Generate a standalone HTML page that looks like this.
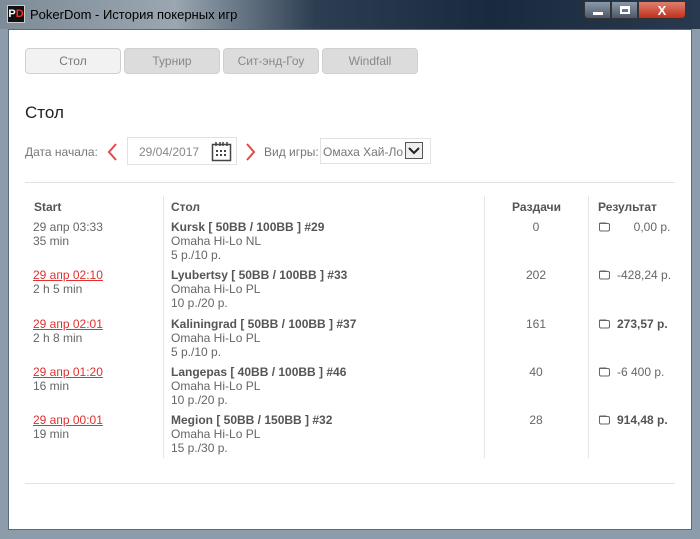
<!DOCTYPE html>
<html><head><meta charset="utf-8"><style>
*{margin:0;padding:0;box-sizing:border-box}
body{width:700px;height:539px;overflow:hidden;background:#6f8090;font-family:"Liberation Sans",Arial,"Noto Sans CJK SC",sans-serif;position:relative}
.tb{position:absolute;left:0;top:0;width:700px;height:30px;background:linear-gradient(90deg,#7d8b98 0%,#9aa6b0 25%,#2d3e52 45%,#1a2a3e 70%,#2a3a4e 100%)}
.frame{position:absolute;left:0;top:29px;width:700px;height:510px;background:#8c9cab}
.win{position:absolute;left:8px;top:29px;width:684px;height:501px;background:#fff;border:1px solid #5a6a7a}
.abs{position:absolute}
.t{font-size:12px;color:#666;line-height:14px}
.tab{position:absolute;top:48px;height:26px;border-radius:4px;background:#dcdcdc;border:1px solid #d0d0d0;color:#888;font-size:12px;text-align:center;line-height:24px;width:96px}
.b{font-weight:bold;color:#555}
.red{color:#e03030;text-decoration:underline}
.vl{position:absolute;top:196px;height:262px;width:1px;background:#e6e6e6}
.wal{display:inline-block;width:13px;height:11px;vertical-align:-1px;margin-right:6px}
</style></head><body>
<svg width="0" height="0" style="position:absolute"><defs><symbol id="w" viewBox="0 0 13 11"><path d="M2.5 2.5h7.5a1.5 1.5 0 0 1 1.5 1.5v4.5a1.5 1.5 0 0 1-1.5 1.5h-7a1.5 1.5 0 0 1-1.5-1.5v-5.5a1 1 0 0 1 1-1z M1.5 3.5a1 1 0 0 1 1-1.5h6" fill="none" stroke="#666" stroke-width="1"/></symbol></defs></svg>
<div class="tb"></div>
<div class="frame"></div>
<div class="abs" style="left:7px;top:5px;width:18px;height:18px;background:#111;border:1px solid #ccc;color:#fff;font-size:11px;font-weight:bold;line-height:16px;text-align:center">P<span style="color:#e33">D</span></div>
<div class="abs" style="left:30px;top:7px;font-size:13px;color:#000">PokerDom - История покерных игр</div>
<div class="abs" style="left:584px;top:1px;width:27px;height:18px;background:linear-gradient(#8a98a8,#4a5868);border:1px solid #333;border-radius:0 0 0 4px"><div style="position:absolute;left:8px;top:10px;width:10px;height:3px;background:#fff"></div></div>
<div class="abs" style="left:611px;top:1px;width:27px;height:18px;background:linear-gradient(#8a98a8,#4a5868);border:1px solid #333"><div style="position:absolute;left:8px;top:4px;width:10px;height:8px;border:2px solid #fff;border-top-width:3px"></div></div>
<div class="abs" style="left:638px;top:1px;width:48px;height:18px;background:linear-gradient(#e08070,#c0301c);border:1px solid #333;border-radius:0 0 4px 0;color:#fff;font-weight:bold;font-size:13px;text-align:center;line-height:17px">X</div>
<div class="win"></div>
<div class="tab" style="left:25px;background:#f2f2f2;color:#777">Стол</div>
<div class="tab" style="left:124px">Турнир</div>
<div class="tab" style="left:223px">Сит-энд-Гоу</div>
<div class="tab" style="left:322px">Windfall</div>
<div class="abs" style="left:25px;top:103px;font-size:17px;color:#222">Стол</div>
<div class="abs t" style="left:25px;top:145px;color:#777">Дата начала:</div>
<svg class="abs" style="left:106px;top:142px" width="12" height="20"><path d="M10 2L3 10l7 8" fill="none" stroke="#e04a4a" stroke-width="2"/></svg>
<div class="abs" style="left:127px;top:137px;width:110px;height:28px;border:1px solid #e2e2e2"></div>
<div class="abs t" style="left:139px;top:145px;color:#888">29/04/2017</div>
<svg class="abs" style="left:211px;top:141px" width="21" height="21" viewBox="0 0 21 21"><rect x="1.5" y="3.5" width="18" height="16" fill="none" stroke="#444" stroke-width="1.5"/><path d="M5 1v4M9 1v4M12 1v4M16 1v4" stroke="#444" stroke-width="1.5"/><g fill="#444"><rect x="5" y="9" width="2" height="2"/><rect x="9" y="9" width="2" height="2"/><rect x="13" y="9" width="2" height="2"/><rect x="5" y="13" width="2" height="2"/><rect x="9" y="13" width="2" height="2"/><rect x="13" y="13" width="2" height="2"/></g></svg>
<svg class="abs" style="left:245px;top:142px" width="12" height="20"><path d="M2 2l7 8-7 8" fill="none" stroke="#e04a4a" stroke-width="2"/></svg>
<div class="abs t" style="left:264px;top:145px;color:#777">Вид игры:</div>
<div class="abs" style="left:320px;top:138px;width:111px;height:26px;border:1px solid #e2e2e2"></div>
<div class="abs t" style="left:323px;top:145px;color:#777">Омаха Хай-Ло</div>
<svg class="abs" style="left:405px;top:142px" width="18" height="17"><rect x="0.5" y="0.5" width="17" height="16" fill="#eee" stroke="#555"/><path d="M4 6l5 5 5-5" fill="none" stroke="#222" stroke-width="2"/></svg>
<div class="abs" style="left:25px;top:182px;width:650px;height:1px;background:#e2e2e2"></div>
<div class="abs" style="left:25px;top:483px;width:650px;height:1px;background:#e2e2e2"></div>
<div class="vl" style="left:163px"></div><div class="vl" style="left:484px"></div><div class="vl" style="left:588px"></div>
<div class="abs t b" style="left:34px;top:200px">Start</div>
<div class="abs t b" style="left:171px;top:200px">Стол</div>
<div class="abs t b" style="left:512px;top:200px">Раздачи</div>
<div class="abs t b" style="left:598px;top:200px">Результат</div>

<div class="abs t" style="left:33px;top:220px">29 апр 03:33<br>35 min</div>
<div class="abs t" style="left:171px;top:220px"><span class="b">Kursk [ 50BB / 100BB ] #29</span><br>Omaha Hi-Lo NL<br>5 р./10 р.</div>
<div class="abs t" style="left:484px;top:220px;width:104px;text-align:center">0</div>
<div class="abs t" style="left:598px;top:220px"><svg class="wal"><use href="#w"/></svg>&nbsp;&nbsp;&nbsp;&nbsp;&nbsp;0,00 р.</div>

<div class="abs t" style="left:33px;top:268px"><span class="red">29 апр 02:10</span><br>2 h 5 min</div>
<div class="abs t" style="left:171px;top:268px"><span class="b">Lyubertsy [ 50BB / 100BB ] #33</span><br>Omaha Hi-Lo PL<br>10 р./20 р.</div>
<div class="abs t" style="left:484px;top:268px;width:104px;text-align:center">202</div>
<div class="abs t" style="left:598px;top:268px"><svg class="wal"><use href="#w"/></svg>-428,24 р.</div>

<div class="abs t" style="left:33px;top:317px"><span class="red">29 апр 02:01</span><br>2 h 8 min</div>
<div class="abs t" style="left:171px;top:317px"><span class="b">Kaliningrad [ 50BB / 100BB ] #37</span><br>Omaha Hi-Lo PL<br>5 р./10 р.</div>
<div class="abs t" style="left:484px;top:317px;width:104px;text-align:center">161</div>
<div class="abs t" style="left:598px;top:317px"><svg class="wal"><use href="#w"/></svg><span class="b">273,57 р.</span></div>

<div class="abs t" style="left:33px;top:365px"><span class="red">29 апр 01:20</span><br>16 min</div>
<div class="abs t" style="left:171px;top:365px"><span class="b">Langepas [ 40BB / 100BB ] #46</span><br>Omaha Hi-Lo PL<br>10 р./20 р.</div>
<div class="abs t" style="left:484px;top:365px;width:104px;text-align:center">40</div>
<div class="abs t" style="left:598px;top:365px"><svg class="wal"><use href="#w"/></svg>-6 400 р.</div>

<div class="abs t" style="left:33px;top:413px"><span class="red">29 апр 00:01</span><br>19 min</div>
<div class="abs t" style="left:171px;top:413px"><span class="b">Megion [ 50BB / 150BB ] #32</span><br>Omaha Hi-Lo PL<br>15 р./30 р.</div>
<div class="abs t" style="left:484px;top:413px;width:104px;text-align:center">28</div>
<div class="abs t" style="left:598px;top:413px"><svg class="wal"><use href="#w"/></svg><span class="b">914,48 р.</span></div>
</body></html>
